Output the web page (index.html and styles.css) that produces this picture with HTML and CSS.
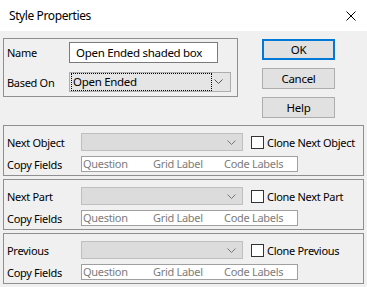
FILE: index.html
```html
<!DOCTYPE html>
<html lang="en">
<head>
    <meta charset="UTF-8">
    <title>Style Properties</title>
    <link rel="stylesheet" href="styles.css">
</head>
<body>
    <div class="dialog">
        <div class="titlebar">
            <span class="title">Style Properties</span>
            <svg class="close" width="10" height="10" viewBox="0 0 10 10">
                <path d="M0.5 0.5 L9.5 9.5 M9.5 0.5 L0.5 9.5" stroke="#000" stroke-width="1" fill="none"/>
            </svg>
        </div>
        <div class="content">
            <div class="top-row">
                <div class="group group-main">
                    <div class="row row-name">
                        <span class="label">Name</span>
                        <div class="textbox">Open Ended shaded box</div>
                    </div>
                    <div class="row row-based">
                        <span class="label">Based On</span>
                        <div class="combo combo-active">
                            <span class="focus">Open Ended</span>
                            <svg class="chevron" width="9" height="5" viewBox="0 0 9 5"><polyline points="0.5,0.5 4.5,4.5 8.5,0.5" stroke="#555" fill="none"/></svg>
                        </div>
                    </div>
                </div>
                <div class="buttons">
                    <div class="btn btn-default">OK</div>
                    <div class="btn">Cancel</div>
                    <div class="btn">Help</div>
                </div>
            </div>

            <div class="group group-link">
                <div class="row">
                    <span class="label label-wide">Next Object</span>
                    <div class="combo combo-disabled">
                        <svg class="chevron" width="9" height="5" viewBox="0 0 9 5"><polyline points="0.5,0.5 4.5,4.5 8.5,0.5" stroke="#777" fill="none"/></svg>
                    </div>
                    <span class="check"></span>
                    <span class="check-label">Clone Next Object</span>
                </div>
                <div class="row row-fields">
                    <span class="label label-wide">Copy Fields</span>
                    <div class="fields"><span class="f1">Question</span><span class="f2">Grid Label</span><span>Code Labels</span></div>
                </div>
            </div>

            <div class="group group-link">
                <div class="row">
                    <span class="label label-wide">Next Part</span>
                    <div class="combo combo-disabled">
                        <svg class="chevron" width="9" height="5" viewBox="0 0 9 5"><polyline points="0.5,0.5 4.5,4.5 8.5,0.5" stroke="#777" fill="none"/></svg>
                    </div>
                    <span class="check"></span>
                    <span class="check-label">Clone Next Part</span>
                </div>
                <div class="row row-fields">
                    <span class="label label-wide">Copy Fields</span>
                    <div class="fields"><span class="f1">Question</span><span class="f2">Grid Label</span><span>Code Labels</span></div>
                </div>
            </div>

            <div class="group group-link">
                <div class="row">
                    <span class="label label-wide">Previous</span>
                    <div class="combo combo-disabled">
                        <svg class="chevron" width="9" height="5" viewBox="0 0 9 5"><polyline points="0.5,0.5 4.5,4.5 8.5,0.5" stroke="#777" fill="none"/></svg>
                    </div>
                    <span class="check"></span>
                    <span class="check-label">Clone Previous</span>
                </div>
                <div class="row row-fields">
                    <span class="label label-wide">Copy Fields</span>
                    <div class="fields"><span class="f1">Question</span><span class="f2">Grid Label</span><span>Code Labels</span></div>
                </div>
            </div>
        </div>
    </div>
</body>
</html>
```

FILE: styles.css
```css
body {
    margin: 0;
    font-family: "Noto Sans", "Open Sans", sans-serif;
    font-size: 11px;
    letter-spacing: -0.3px;
    color: #000;
}
.dialog {
    width: 367px;
    height: 287px;
    background: #f0f0f0;
    overflow: hidden;
}
.titlebar {
    height: 31px;
    background: #fff;
    display: flex;
    align-items: center;
    justify-content: space-between;
    padding: 0 11px 0 9px;
}
.title {
    font-size: 12px;
    letter-spacing: -0.4px;
    margin-top: -1px;
}
.close {
    display: block;
    margin-top: 1px;
}
.content {
    padding: 7px 0 0 3px;
}
.top-row {
    display: flex;
    align-items: flex-start;
    height: 80px;
    margin-bottom: 7px;
}
.group {
    border: 1px solid #8f8f8f;
    box-sizing: border-box;
}
.group-main {
    width: 235px;
    height: 59px;
    padding: 3px 0 0 3px;
}
.group-link {
    width: 361px;
    height: 51px;
    margin-bottom: 3px;
    padding: 7px 0 0 3px;
}
.row {
    display: flex;
    align-items: center;
}
.label {
    width: 62px;
    white-space: nowrap;
}
.label-wide {
    width: 74px;
}
.textbox {
    width: 149px;
    height: 21px;
    box-sizing: border-box;
    border: 1px solid #7a7a7a;
    background: #fff;
    padding: 0 0 0 6px;
    font-size: 11.5px;
    line-height: 19px;
}
.row-based {
    margin-top: 9px;
}
.combo {
    position: relative;
    width: 162px;
    box-sizing: border-box;
    display: flex;
    align-items: center;
}
.combo-active {
    height: 20px;
    background: #e5e5e5;
    border: 1px solid #adadad;
    padding: 0 0 0 1px;
}
.focus {
    width: 141px;
    height: 18px;
    box-sizing: border-box;
    border: 1px dotted #000;
    padding-left: 1px;
    font-size: 11.5px;
    line-height: 16px;
}
.combo-disabled {
    height: 18px;
    background: #dcdcdc;
    border: 1px solid #bfbfbf;
}
.chevron {
    position: absolute;
    right: 7px;
    top: 6px;
}
.combo-disabled .chevron {
    top: 6px;
    right: 6px;
}
.check {
    width: 13px;
    height: 13px;
    box-sizing: border-box;
    border: 1px solid #333;
    background: #fff;
    margin-left: 8px;
}
.check-label {
    margin-left: 3px;
    white-space: nowrap;
}
.row-fields {
    margin-top: 5px;
}
.fields {
    width: 217px;
    height: 16px;
    box-sizing: border-box;
    border: 1px solid #a0a0a0;
    background: #fff;
    color: #7c7c7c;
    display: flex;
    padding-left: 1px;
    line-height: 14px;
    white-space: nowrap;
}
.f1 {
    width: 70px;
}
.f2 {
    width: 71px;
}
.buttons {
    margin: 1px 0 0 24px;
    display: flex;
    flex-direction: column;
    gap: 8px;
}
.btn {
    width: 73px;
    height: 21px;
    box-sizing: border-box;
    border: 1px solid #adadad;
    background: #e1e1e1;
    text-align: center;
    line-height: 19px;
    font-size: 11.5px;
}
.btn-default {
    border: 2px solid #0078d7;
    line-height: 17px;
}
```
